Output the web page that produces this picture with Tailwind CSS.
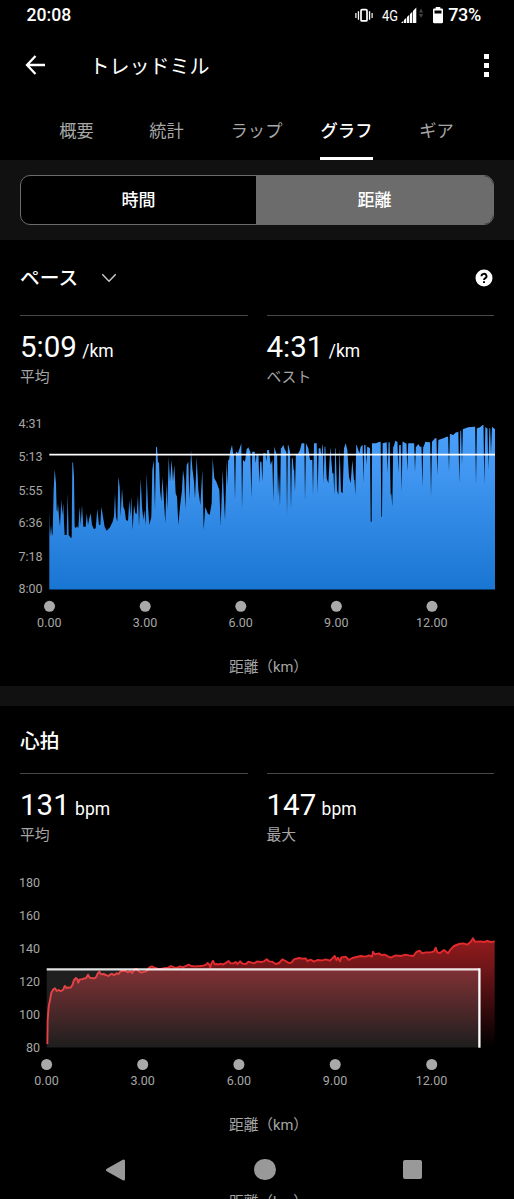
<!DOCTYPE html>
<html lang="ja">
<head>
<meta charset="utf-8">
<title>トレッドミル</title>
<script src="https://cdn.jsdelivr.net/npm/@tailwindcss/browser@4"></script>
</head>
<body class="bg-black">
<div class="flex h-[1199px] w-[514px] flex-col overflow-hidden bg-black font-['Roboto','Noto_Sans_CJK_JP',sans-serif] text-white">
  <!-- Status bar -->
  <div class="flex h-[30px] shrink-0 items-center pl-[26.500px] pr-[33px]">
    <span class="text-[17.600px] leading-[30px] font-medium">20:08</span>
    <svg class="ml-auto h-[30px] w-[92px]" viewBox="354 0 92 30" fill="#fff">
      <rect x="361" y="9.7" width="6" height="11.2" rx="1" fill="none" stroke="#fff" stroke-width="1.7"/>
      <path d="M357.8 11.2h1.3v8.6h-1.3zM355.3 13h1.2v5h-1.2zM368.9 11.2h1.3v8.6h-1.3zM371.5 13h1.2v5h-1.2z"/>
      <text x="382" y="20.8" font-size="15" textLength="16" lengthAdjust="spacingAndGlyphs">4G</text>
      <path d="M401 23l2.300-2.300V23zM404 20l2.300-2.300V23H404zM407 17l2.300-2.300V23H407zM410 14l2.300-2.300V23H410zM413 11l3.300-3.500V23H413z"/>
      <path d="M419 12.500l2-4 2 4zM419 14l2 4 2-4z" fill="#444"/>
      <path fill-rule="evenodd" d="M435.700 7h4.600v1.600h1.500q1.200 0 1.200 1.200v12.300q0 1.200-1.200 1.200h-7.600q-1.200 0-1.200-1.200V9.800q0-1.200 1.200-1.200h1.500zM434.500 10.500v3h7v-3z"/>
    </svg>
    <span class="ml-[2px] text-[18px] leading-[30px] font-medium tracking-[-0.3px]">73%</span>
  </div>
  <!-- App bar -->
  <div class="flex h-[70px] shrink-0 items-center pl-[25px] pr-[25px]">
    <svg class="h-[20px] w-[21px]" viewBox="0 0 21 20" fill="none" stroke="#fff" stroke-width="2.300"><path d="M10.500 1L2 10l8.500 9M2 10h18"/></svg>
    <h1 class="ml-[43.500px] pt-[3px] text-[20px] leading-[30px]">トレッドミル</h1>
    <div class="ml-auto flex flex-col gap-[4px]"><i class="size-[5px] bg-white"></i><i class="size-[5px] bg-white"></i><i class="size-[5px] bg-white"></i></div>
  </div>
  <!-- Tabs -->
  <div class="flex h-[60px] shrink-0 justify-center pr-[1px] text-[17.3px] leading-[62px] text-[#a6a6a6]">
    <span class="w-[90px] text-center">概要</span>
    <span class="w-[90px] text-center">統計</span>
    <span class="w-[90px] text-center">ラップ</span>
    <span class="flex w-[90px] justify-center text-white"><b class="h-[60px] w-[53px] border-b-[3px] border-white text-center font-medium">グラフ</b></span>
    <span class="w-[90px] text-center">ギア</span>
  </div>
  <!-- Axis switch -->
  <div class="h-[80px] shrink-0 bg-[#111] px-[20px] pt-[15px]">
    <div class="flex h-[50px] overflow-hidden rounded-[10px] border-[1.5px] border-[#6c6c6c] bg-black text-center text-[17px] leading-[49px] font-medium">
      <span class="w-[235px]">時間</span><span class="flex-1 bg-[#6c6c6c]">距離</span>
    </div>
  </div>
  <!-- Pace -->
  <section class="h-[446px] shrink-0">
    <div class="flex h-[75px] items-center px-[20px]">
      <h2 class="pt-[3px] text-[19.700px] leading-[30px] font-medium">ペース</h2>
      <svg class="ml-[23px] h-[10px] w-[16px]" viewBox="0 0 16 10" fill="none" stroke="#ccc" stroke-width="1.400"><path d="M1.300 1.300l6.700 7 6.700-7"/></svg>
      <svg class="ml-auto mr-[1px] h-[18px] w-[18px]" viewBox="0 0 18 18"><circle cx="9" cy="9" r="8.500" fill="#fff"/><path d="M6.500 7.200a2.500 2.300 0 1 1 3.800 1.900q-1.300.8-1.300 2" fill="none" stroke="#000" stroke-width="1.900"/><path d="M8 12.200h2v1.900H8z"/></svg>
    </div>
    <div class="flex gap-[19px] px-[20px]">
      <div class="h-[95px] flex-1 border-t border-[#474747] pt-[12px]">
        <p class="text-[29.500px] leading-[38px] whitespace-pre">5:09<span class="ml-[1px] text-[17.500px]"> /km</span></p>
        <p class="-mt-[4px] text-[14.800px] leading-[22px] text-[#a6a6a6]">平均</p>
      </div>
      <div class="h-[95px] flex-1 border-t border-[#474747] pt-[12px]">
        <p class="text-[29.500px] leading-[38px] whitespace-pre">4:31<span class="ml-[1px] text-[17.500px]"> /km</span></p>
        <p class="-mt-[4px] text-[14.800px] leading-[22px] text-[#a6a6a6]">ベスト</p>
      </div>
    </div>
    <svg class="block h-[240px] w-[514px]" viewBox="0 410 514 240">
      <defs><linearGradient id="blue" gradientUnits="userSpaceOnUse" x1="0" y1="425" x2="0" y2="589"><stop stop-color="#4aa0fb"/><stop offset=".3" stop-color="#4096f1"/><stop offset="1" stop-color="#1976d2"/></linearGradient></defs>
      <path id="pace" fill="url(#blue)"/>
      <path d="M49.300 454.600H495" stroke="#fff" stroke-width="1.800"/>
      <g fill="#a6a6a6" font-size="12.500" text-anchor="end"><text x="42.500" y="428.300">4:31</text><text x="42.500" y="461.300">5:13</text><text x="42.500" y="494.500">5:55</text><text x="42.500" y="527.300">6:36</text><text x="42.500" y="560.500">7:18</text><text x="42.500" y="593.300">8:00</text></g>
      <g fill="#a9a9a9"><circle cx="49.500" cy="606.300" r="5.500"/><circle cx="145.200" cy="606.300" r="5.500"/><circle cx="240.800" cy="606.300" r="5.500"/><circle cx="336.400" cy="606.300" r="5.500"/><circle cx="432" cy="606.300" r="5.500"/></g>
      <g fill="#a6a6a6" font-size="12.500" text-anchor="middle"><text x="49.300" y="627">0.00</text><text x="145" y="627">3.00</text><text x="240.700" y="627">6.00</text><text x="336.300" y="627">9.00</text><text x="431.800" y="627">12.00</text></g>
    </svg>
    <p class="pl-[23px] text-center text-[14.700px] leading-[34px] text-[#a6a6a6]">距離（km）</p>
  </section>
  <div class="h-[20px] shrink-0 bg-[#111]"></div>
  <!-- Heart rate -->
  <section class="h-[434px] shrink-0">
    <h2 class="h-[67px] px-[20px] text-[19.700px] leading-[71px] font-medium">心拍</h2>
    <div class="flex gap-[19px] px-[20px]">
      <div class="h-[95px] flex-1 border-t-[1.500px] border-[#474747] pt-[12px]">
        <p class="text-[29.500px] leading-[38px] whitespace-pre">131<span class="ml-[1px] text-[17.500px]"> bpm</span></p>
        <p class="-mt-[4px] text-[14.800px] leading-[22px] text-[#a6a6a6]">平均</p>
      </div>
      <div class="h-[95px] flex-1 border-t-[1.500px] border-[#474747] pt-[12px]">
        <p class="text-[29.500px] leading-[38px] whitespace-pre">147<span class="ml-[1px] text-[17.500px]"> bpm</span></p>
        <p class="-mt-[4px] text-[14.800px] leading-[22px] text-[#a6a6a6]">最大</p>
      </div>
    </div>
    <svg class="block h-[240px] w-[514px]" viewBox="0 868 514 240">
      <defs><linearGradient id="red" gradientUnits="userSpaceOnUse" x1="0" y1="938" x2="0" y2="1047"><stop stop-color="#941b1d"/><stop offset=".3" stop-color="#6c1518"/><stop offset="1" stop-color="#000"/></linearGradient></defs>
      <path id="hrArea" fill="url(#red)"/>
      <path id="hrLine" fill="none" stroke="#e22b2e" stroke-width="1.900" stroke-linejoin="round"/>
      <path d="M46.700 969.300H479.500V1047.500H46.700z" fill="#fff" fill-opacity=".12"/>
      <path d="M46.700 969.400H479.400" fill="none" stroke="#fff" stroke-opacity=".88" stroke-width="2.300"/>
      <path d="M479.400 968.300V1047.700" stroke="#fff" stroke-width="2.300"/>
      <g fill="#a6a6a6" font-size="12.500" text-anchor="end"><text x="40" y="886.500">180</text><text x="40" y="919.500">160</text><text x="40" y="952.700">140</text><text x="40" y="985.700">120</text><text x="40" y="1018.700">100</text><text x="40" y="1051.700">80</text></g>
      <g fill="#a9a9a9"><circle cx="46.600" cy="1064.500" r="5.500"/><circle cx="142.700" cy="1064.500" r="5.500"/><circle cx="238.900" cy="1064.500" r="5.500"/><circle cx="335.200" cy="1064.500" r="5.500"/><circle cx="431.700" cy="1064.500" r="5.500"/></g>
      <g fill="#a6a6a6" font-size="12.500" text-anchor="middle"><text x="46.500" y="1085.300">0.00</text><text x="142.600" y="1085.300">3.00</text><text x="238.900" y="1085.300">6.00</text><text x="335" y="1085.300">9.00</text><text x="431.500" y="1085.300">12.00</text></g>
    </svg>
    <p class="pl-[23px] text-center text-[14.700px] leading-[34px] text-[#a6a6a6]">距離（km）</p>
  </section>
  <!-- System navigation -->
  <div class="flex h-[50px] shrink-0 items-center pt-[9px] pl-[105px] pr-[92px]">
    <svg class="h-[24px] w-[22px]" viewBox="0 0 22 24"><path d="M2.500 12L18.500 3V21z" fill="#999" stroke="#999" stroke-width="3" stroke-linejoin="round"/></svg>
    <i class="mx-auto size-[21.500px] rounded-full bg-[#999]"></i>
    <i class="size-[19px] rounded-[2px] bg-[#999]"></i>
  </div>
  <p class="mt-[2px] shrink-0 pl-[23px] text-center text-[14.700px] leading-[20px] text-[#a6a6a6]">距離（km）</p>
</div>
<script>
// Samples are stored in thirds of a pixel, in blocks with a horizontal offset.
function parse(blocks) {
  return blocks.flatMap(([dx, data]) => data.trim().split(/\s+/).map(p => {
    const [x, y] = p.split(',').map(Number);
    return [x + dx, y];
  }));
}
function toPath(list, y0) {
  return list.map(([x, y]) => (x / 3).toFixed(2) + ' ' + (y / 3 + y0).toFixed(2)).join('L');
}
// Short slow-downs in the later part are spikes about two pixels wide.
function sharpen(list, from) {
  return list.flatMap((p, i) => {
    const a = list[i - 1], b = list[i + 1];
    if (!a || !b || p[0] < from || p[1] - a[1] < 25 || p[1] - b[1] < 25) return [p];
    const out = [];
    if (p[0] - a[0] > 3) out.push([p[0] - 2.6, a[1]]);
    out.push(p);
    if (b[0] - p[0] > 3) out.push([p[0] + 2.6, b[1]]);
    return out;
  });
}
const pace = toPath(sharpen(parse([
  [0, '148,300 150,380 153,345 156,378 158,370 161,240 164,178 168,220 170,300 172,305 174,280 177,320 180,350 184,268 187,315 190,280 192,340 194,375 200,375 203,250 206,375 212,383 215,383 217,160 219,155 222,200 224,350 228,355 231,348 235,355 239,290 242,345 246,285 250,350 257,350 260,310 264,345 268,325 272,310 276,345 282,358 287,355 292,297 297,345 301,345 304,290 309,320 314,350 320,362 330,352 338,335 342,318 345,250 348,320 352,335 355,200 359,230 362,320 366,235 370,290 374,300 378,330 384,333 388,270 391,320 394,260 398,360 402,285 406,310 410,312 414,255 417,350 422,205 426,290 430,330 433,300 437,345 440,190 444,290 448,345 454,320 457,180 461,150 465,300 468,112 471,110 474,160 477,155 480,240 484,275 487,200 492,275 496,340 499,215 502,300 506,140 510,215'],
  [510, '5,150 9,215 13,165 17,250 21,260 25,345 30,290 36,240 39,180 43,210 46,298 50,165 55,155 58,270 63,120 67,175 72,215 75,268 80,140 85,240 91,285 97,180 101,360 106,290 113,310 119,315 125,280 128,145 133,205 139,215 148,240 152,345 158,180 161,250 165,330 170,150 172,230 177,150 181,122 186,105 190,135 195,270 199,125 204,130 209,115 214,100 216,300 219,150 225,155 230,118 235,112 241,125 244,265 249,125 254,125 257,160 264,135 268,220 273,155 277,215 284,130 289,155 297,120 302,165 307,150 310,275 313,110 320,135 324,260 327,190 330,290 334,115 340,105 345,120 349,125 351,318 355,105 360,125 363,300 368,145 371,180 375,245 382,135 390,120 395,100 403,100 405,275 408,100 415,115 420,150 427,150 429,255 432,100 440,100 443,250 446,115 454,140 457,105 461,220 466,110 470,205 475,220 481,110 487,190 493,255 497,115 501,240 505,255 509,115 513,245 518,250 522,115 527,100 532,120 537,200'],
  [1020, '32,220 37,150 42,210 46,255 50,105 58,130 62,110 68,105 70,220 74,105 79,165 83,110 90,115 92,335 95,335 96,100 108,100 115,97 122,95 124,320 126,320 128,100 140,97 143,190 149,97 152,255 154,250 157,290 161,110 166,92 171,95 175,190 180,105 185,245 190,95 196,100 202,185 206,100 218,100 225,185 229,110 235,102 240,110 247,230 251,110 256,95 266,97 273,260 276,95 285,85 292,195 295,90 310,85 320,80 327,185 331,72 340,75 346,68 355,65 358,220 361,62 366,165 370,57 385,52 402,50 408,225 412,55 420,52 428,45 433,225 436,50 440,55 445,180 448,55 453,130 456,50 461,55 465,57']
]), 680), 410);
document.getElementById('pace').setAttribute('d', 'M49.3 589.5L' + pace + 'V589.5z');
const hr = toPath(parse([
  [0, '142,522 143,450 146,410 150,390 154,368 160,358 165,355 170,363 176,360 181,363 186,362 190,358 194,348 200,354 206,352 212,353 217,345 222,330 228,324 232,328 235,338 239,328 246,328 252,325 258,325 264,314 269,323 275,324 282,325 288,322 293,311 298,305 303,313 310,312 318,315 325,318 330,314 336,311 342,316 350,310 356,312 362,303 370,303 376,302 383,307 390,303 397,309 403,298 410,297 417,304 424,308 430,306 438,304 443,300 448,292 456,289 465,294 475,297 485,296 497,294 505,293 513,288 522,292 532,293 540,289 548,292 560,287 566,284 574,288 585,289 600,288 610,287 618,284 623,279 628,284 631,293 635,278 639,272 644,283 650,282 655,284 662,281 668,284 675,280 686,273 692,280 700,280 707,276 713,282 720,274 728,281 738,282 745,275 755,278'],
  [762, '0,280 10,274 20,276 30,274 38,268 45,274 55,275 65,282 75,279 85,268 95,273 105,279 112,278 120,268 135,264 145,266 155,265 160,273 170,269 180,275 190,270 205,271 215,268 228,272 235,265 242,258 247,270 252,263 258,274 262,262 275,260 285,270 295,264 308,261 320,258 335,260 345,256 354,260 357,245 362,253 375,250 382,255 392,254 402,259 410,263 425,256 440,258 455,254 465,256 478,258 487,246 497,242 505,250 515,247 530,247 540,244 545,233 550,247 558,249 570,240 582,250 590,238 600,228 615,222 628,220 640,224 650,215 657,205 663,215 680,214 690,216 700,213 710,216 722,214']
]), 870);
document.getElementById('hrLine').setAttribute('d', 'M' + hr);
document.getElementById('hrArea').setAttribute('d', 'M46.7 1047.5L' + hr + 'V1047.5z');
</script>
</body>
</html>
